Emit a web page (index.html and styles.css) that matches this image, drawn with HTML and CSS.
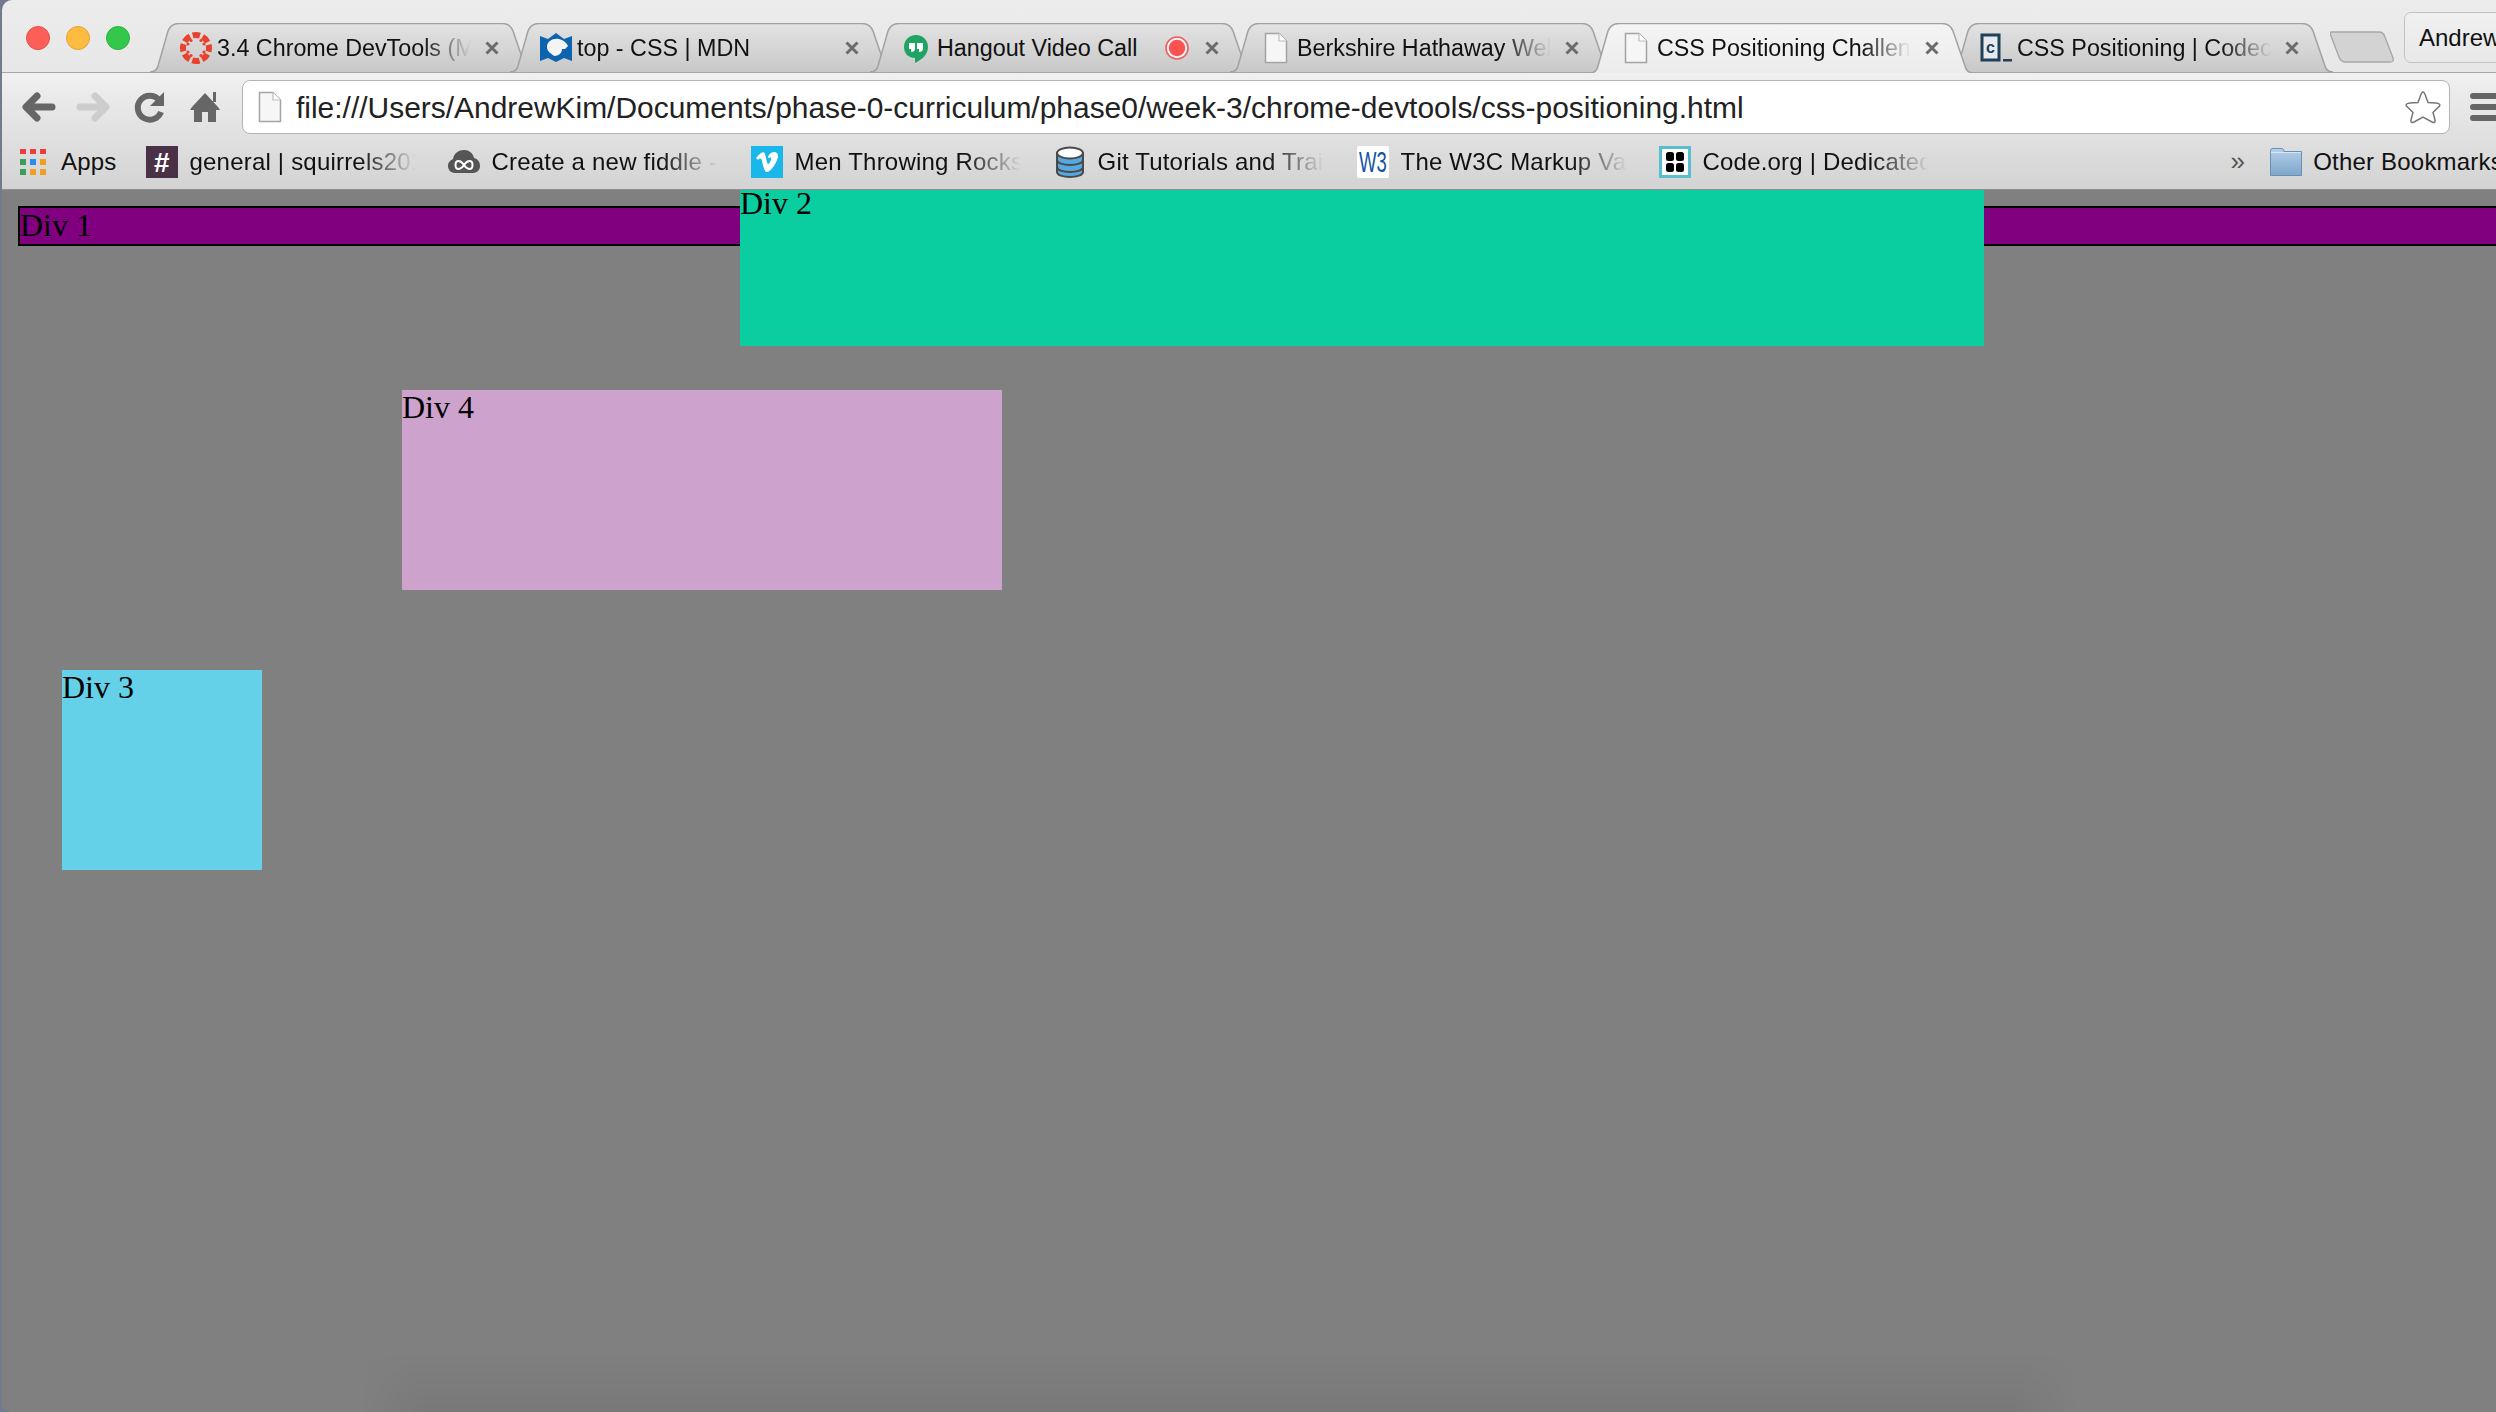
FILE: index.html
```html
<!DOCTYPE html>
<html lang="en">
<head>
    <meta charset="UTF-8">
    <title>CSS Positioning Challenge</title>
    <link rel="stylesheet" href="styles.css">
</head>
<body>

<svg class="defs" width="0" height="0">
    <defs>
        <linearGradient id="tab-off" x1="0" y1="0" x2="0" y2="1">
            <stop offset="0" stop-color="#e3e3e3"/>
            <stop offset="1" stop-color="#c8c8c8"/>
        </linearGradient>
        <linearGradient id="tab-on" x1="0" y1="0" x2="0" y2="1">
            <stop offset="0" stop-color="#f4f4f4"/>
            <stop offset="1" stop-color="#ececec"/>
        </linearGradient>
        <linearGradient id="folder-fill" x1="0" y1="0" x2="0" y2="1">
            <stop offset="0" stop-color="#b5d0e8"/>
            <stop offset="1" stop-color="#7ea6cc"/>
        </linearGradient>
        <symbol id="doc" viewBox="0 0 24 32">
            <path d="M1.5 1.5H15L22.5 9V30.5H1.5Z" fill="#f6f6f6" stroke="#a4a4a4" stroke-width="1.5"/>
            <path d="M15 1.5V9H22.5" fill="#fff" stroke="#bdbdbd" stroke-width="1.2"/>
        </symbol>
        <symbol id="x" viewBox="0 0 14 14">
            <path d="M1.5 1.5L12.5 12.5M12.5 1.5L1.5 12.5" stroke="#6c6c6c" stroke-width="3" fill="none"/>
        </symbol>
    </defs>
</svg>

<div class="window">
    <div class="tab-strip">
        <div class="traffic">
            <span class="light light-red"></span>
            <span class="light light-yellow"></span>
            <span class="light light-green"></span>
        </div>
        <div class="tab">
            <svg class="tab-shape" viewBox="0 0 383 50"><path d="M0 49C5 49 7 47 8 43L18 8C20 3 23 .5 29 .5H352C358 .5 361 3 363 8L375 43C376 47 378 49 383 49" fill="url(#tab-off)" stroke="#a2a2a2" stroke-width="1.5"/></svg>
            <svg class="favicon" viewBox="0 0 32 32">
                <circle cx="16" cy="16" r="13" fill="none" stroke="#e8412e" stroke-width="6" stroke-dasharray="7.4 2.8" stroke-dashoffset="3.7"/>
                <g fill="#e8412e">
                    <circle cx="11" cy="8.5" r="1.6"/><circle cx="21" cy="8.5" r="1.6"/>
                    <circle cx="8" cy="12" r="1.6"/><circle cx="24" cy="12" r="1.6"/>
                    <circle cx="8" cy="20" r="1.6"/><circle cx="24" cy="20" r="1.6"/>
                    <circle cx="11" cy="23.5" r="1.6"/><circle cx="21" cy="23.5" r="1.6"/>
                </g>
            </svg>
            <span class="tab-title">3.4 Chrome DevTools (Mo</span>
            <svg class="tab-close"><use href="#x"/></svg>
        </div>
        <div class="tab">
            <svg class="tab-shape" viewBox="0 0 383 50"><path d="M0 49C5 49 7 47 8 43L18 8C20 3 23 .5 29 .5H352C358 .5 361 3 363 8L375 43C376 47 378 49 383 49" fill="url(#tab-off)" stroke="#a2a2a2" stroke-width="1.5"/></svg>
            <svg class="favicon" viewBox="0 0 32 32">
                <path d="M0 4L8 7L16 1L24 7L32 4V29L24 26L16 30L8 26L0 29Z" fill="#0d63ad"/>
                <path d="M7 15C7 9 13 6 19 7C23 8 27 11 28 14L25 17L22 17C22 21 19 24 14 24C12 22 7 20 7 15Z" fill="#f4f4f4"/>
            </svg>
            <span class="tab-title">top - CSS | MDN</span>
            <svg class="tab-close"><use href="#x"/></svg>
        </div>
        <div class="tab">
            <svg class="tab-shape" viewBox="0 0 383 50"><path d="M0 49C5 49 7 47 8 43L18 8C20 3 23 .5 29 .5H352C358 .5 361 3 363 8L375 43C376 47 378 49 383 49" fill="url(#tab-off)" stroke="#a2a2a2" stroke-width="1.5"/></svg>
            <svg class="favicon" viewBox="0 0 32 32">
                <path d="M16 3C9 3 4 8 4 15C4 22 9 26 15 26V31C21 28 28 23 28 15C28 8 23 3 16 3Z" fill="#1fa463"/>
                <path d="M9 11H15V17C15 19 13 20 11 20V17H9ZM17 11H23V17C23 19 21 20 19 20V17H17Z" fill="#fff"/>
            </svg>
            <span class="tab-title tab-title-full">Hangout Video Call</span>
            <svg class="record" viewBox="0 0 24 24"><circle cx="12" cy="12" r="11" fill="#f8f8f8" stroke="#f25a5a" stroke-width="1.6"/><circle cx="12" cy="12" r="8.2" fill="#f85252"/></svg>
            <svg class="tab-close"><use href="#x"/></svg>
        </div>
        <div class="tab">
            <svg class="tab-shape" viewBox="0 0 383 50"><path d="M0 49C5 49 7 47 8 43L18 8C20 3 23 .5 29 .5H352C358 .5 361 3 363 8L375 43C376 47 378 49 383 49" fill="url(#tab-off)" stroke="#a2a2a2" stroke-width="1.5"/></svg>
            <svg class="favicon"><use href="#doc"/></svg>
            <span class="tab-title">Berkshire Hathaway Web Pa</span>
            <svg class="tab-close"><use href="#x"/></svg>
        </div>
        <div class="tab tab-active">
            <svg class="tab-shape" viewBox="0 0 383 50"><path d="M0 50C5 50 7 47 8 43L18 8C20 3 23 .5 29 .5H352C358 .5 361 3 363 8L375 43C376 47 378 50 383 50" fill="url(#tab-on)" stroke="#a2a2a2" stroke-width="1.5"/></svg>
            <svg class="favicon"><use href="#doc"/></svg>
            <span class="tab-title">CSS Positioning Challenge</span>
            <svg class="tab-close"><use href="#x"/></svg>
        </div>
        <div class="tab">
            <svg class="tab-shape" viewBox="0 0 383 50"><path d="M0 49C5 49 7 47 8 43L18 8C20 3 23 .5 29 .5H352C358 .5 361 3 363 8L375 43C376 47 378 49 383 49" fill="url(#tab-off)" stroke="#a2a2a2" stroke-width="1.5"/></svg>
            <svg class="favicon" viewBox="0 0 32 32">
                <rect x="2" y="3" width="17" height="25" fill="#e6eaee" stroke="#1f4058" stroke-width="3"/>
                <text x="10.5" y="21" class="favicon-c">c</text>
                <rect x="23" y="27" width="9" height="2.5" fill="#1f4058"/>
            </svg>
            <span class="tab-title">CSS Positioning | Codecademy</span>
            <svg class="tab-close"><use href="#x"/></svg>
        </div>
        <svg class="new-tab" viewBox="0 0 64 32"><path d="M1 1H49C52 1 54 3 55 6L63 27C64 30 62 31 60 31H16C12 31 10 29 9 26L1 5C0 3 0 1 1 1Z" fill="#d3d3d3" stroke="#a8a8a8" stroke-width="1.4"/></svg>
        <div class="profile">Andrew</div>
    </div>

    <div class="chrome-bars">
        <div class="toolbar">
            <svg class="nav-icon" viewBox="0 0 36 36"><path d="M32 18H8M17 7L6 18L17 29" fill="none" stroke="#666" stroke-width="7" stroke-linecap="round" stroke-linejoin="round"/></svg>
            <svg class="nav-icon" viewBox="0 0 36 36"><path d="M4 18H28M19 7L30 18L19 29" fill="none" stroke="#cdcdcd" stroke-width="7" stroke-linecap="round" stroke-linejoin="round"/></svg>
            <svg class="nav-icon" viewBox="0 0 36 36"><path d="M27 11A12 12 0 1 0 29 23" fill="none" stroke="#666" stroke-width="6"/><path d="M32 3V17H18Z" fill="#666"/></svg>
            <svg class="nav-icon nav-home" viewBox="0 0 34 36"><path d="M17 4L30 18L32 21H28V33H20V23H14V33H6V21H2L4 18Z" fill="#666"/><rect x="25" y="3" width="3" height="10" fill="#666"/></svg>
            <div class="omnibox">
                <svg class="omni-doc"><use href="#doc"/></svg>
                <span class="omni-url">file:///Users/AndrewKim/Documents/phase-0-curriculum/phase0/week-3/chrome-devtools/css-positioning.html</span>
                <svg class="omni-star" viewBox="0 0 36 34"><path d="M18 2C19.500 2 20 4 21 7L23 12.500L31 13C34 13.300 35.500 14.500 34.500 16L28 22.500L30 30C30.500 32.500 29 33 27 32L18 27L9 32C7 33 5.500 32.500 6 30L8 22.500L1.500 16C.5 14.500 2 13.300 5 13L13 12.500L15 7C16 4 16.500 2 18 2Z" fill="#fff" stroke="#777" stroke-width="1.5"/></svg>
            </div>
            <div class="menu-btn"><span></span><span></span><span></span></div>
        </div>

        <div class="bookmarks">
            <div class="bm bm-apps">
                <svg class="bm-icon" viewBox="0 0 26 26">
                    <rect width="6" height="5" fill="#ee3b3b"/><rect x="10" width="6" height="5" fill="#ee3b3b"/><rect x="20" width="6" height="5" fill="#ee3b3b"/>
                    <rect y="10" width="6" height="6" fill="#3c9e58"/><rect x="10" y="10" width="6" height="6" fill="#2b8cf0"/><rect x="20" y="10" width="6" height="6" fill="#f0a020"/>
                    <rect y="20" width="6" height="6" fill="#3c9e58"/><rect x="10" y="20" width="6" height="6" fill="#f0a020"/><rect x="20" y="20" width="6" height="6" fill="#f0a020"/>
                </svg>
                <span>Apps</span>
            </div>
            <div class="bm">
                <svg class="bm-icon" viewBox="0 0 32 32"><rect width="32" height="32" fill="#4a3148"/><text x="16" y="26" class="icon-hash">#</text></svg>
                <span class="bm-title bm-title-narrow">general | squirrels2015</span>
            </div>
            <div class="bm">
                <svg class="bm-icon" viewBox="0 0 32 32"><path d="M7 27C2 27 0 23 0 20C0 16 3 14 5 13C6 7 11 4 16 4C21 4 25 7 26 12C30 13 32 16 32 20C32 24 29 27 25 27Z" fill="#555"/><path d="M16 19C14 16 12 15 10.500 15C8.500 15 7.500 17 7.500 19C7.500 21 8.500 23 10.500 23C12 23 14 22 16 19C18 16 20 15 21.500 15C23.500 15 24.500 17 24.500 19C24.500 21 23.500 23 21.500 23C20 23 18 22 16 19Z" fill="none" stroke="#fff" stroke-width="2"/></svg>
                <span class="bm-title">Create a new fiddle - JSFid</span>
            </div>
            <div class="bm">
                <svg class="bm-icon" viewBox="0 0 32 32"><rect width="32" height="32" fill="#1ab7ea"/><path d="M5 12L7 14C9 12 10 12 11 15C12 19 13 26 16 26C20 26 27 15 27 10C27 6 23 5 20 7C18 8 17 10 17 12C19 11 21 11 20 14C19 16 18 18 17 18C16 18 15 11 14 8C13 5 10 6 5 12Z" fill="#fff"/></svg>
                <span class="bm-title">Men Throwing Rocks</span>
            </div>
            <div class="bm">
                <svg class="bm-icon" viewBox="0 0 32 32">
                    <path d="M3 7V26C3 29 9 31 16 31C23 31 29 29 29 26V7Z" fill="#55a8e0" stroke="#4a4a4a" stroke-width="2"/>
                    <path d="M3 14C3 17 9 19 16 19C23 19 29 17 29 14M3 21C3 24 9 26 16 26C23 26 29 24 29 21" fill="none" stroke="#4a4a4a" stroke-width="2"/>
                    <ellipse cx="16" cy="7" rx="13" ry="5.500" fill="#fff" stroke="#4a4a4a" stroke-width="2"/>
                </svg>
                <span class="bm-title">Git Tutorials and Training</span>
            </div>
            <div class="bm">
                <svg class="bm-icon" viewBox="0 0 32 32"><rect width="32" height="32" rx="2" fill="#fff"/><text x="16" y="26" textLength="28" lengthAdjust="spacingAndGlyphs" class="icon-w3">W3</text></svg>
                <span class="bm-title">The W3C Markup Validation</span>
            </div>
            <div class="bm bm-code">
                <svg class="bm-icon" viewBox="0 0 32 32">
                    <rect x="1.500" y="1.500" width="29" height="29" fill="#fff" stroke="#59bfcf" stroke-width="3"/>
                    <rect x="7" y="6" width="8" height="9" rx="2.500"/><rect x="17" y="6" width="8" height="9" rx="2.500"/>
                    <rect x="7" y="17" width="8" height="9" rx="2.500"/><rect x="17" y="17" width="8" height="9" rx="2.500"/>
                </svg>
                <span class="bm-title">Code.org | Dedicated to</span>
            </div>
            <span class="bm-more">»</span>
            <div class="bm bm-other">
                <svg class="bm-icon" viewBox="0 0 32 28"><path d="M.5 4C.5 1 1 .5 3 .5H11C13 .5 13.500 1 14 3.500H31.500V27.500H.5Z" fill="url(#folder-fill)" stroke="#6a8fb2"/><path d="M1 4.500H31" stroke="#d8e6f2"/></svg>
                <span>Other Bookmarks</span>
            </div>
        </div>
    </div>

    <main class="page">
        <div class="box div-1">Div 1</div>
        <div class="box div-2">Div 2</div>
        <div class="box div-4">Div 4</div>
        <div class="box div-3">Div 3</div>
    </main>
</div>

</body>
</html>
```

FILE: styles.css
```css
html, body {
    margin: 0;
    height: 100%;
    background: #717a8e;
    overflow: hidden;
}

.defs {
    position: absolute;
}

.window {
    margin-left: 2px;
    height: 1412px;
    display: flex;
    flex-direction: column;
    border-radius: 10px 0 0 8px;
    overflow: hidden;
    font-family: "Liberation Sans", Arial, sans-serif;
    color: #111;
}

/* tab strip */
.tab-strip {
    flex: none;
    height: 73px;
    box-sizing: border-box;
    padding-left: 24px;
    display: flex;
    align-items: flex-end;
    background: linear-gradient(to bottom, #ececec, #e7e7e7 72px, #a6a6a6 72px);
}

.traffic {
    flex: none;
    align-self: flex-start;
    display: flex;
    gap: 16px;
    margin: 26px 20px 0 0;
}

.light {
    width: 24px;
    height: 24px;
    box-sizing: border-box;
    border-radius: 50%;
    border: 1px solid;
}

.light-red {
    background: #fc5f57;
    border-color: #e0504a;
}

.light-yellow {
    background: #fdbc40;
    border-color: #e0a236;
}

.light-green {
    background: #34c84a;
    border-color: #2cb03f;
}

.tab {
    position: relative;
    flex: none;
    width: 383px;
    height: 50px;
    margin-right: -23px;
    box-sizing: border-box;
    padding-left: 30px;
    display: flex;
    align-items: center;
    font-size: 23.3px;
}

.tab-active {
    z-index: 2;
}

.tab-shape {
    position: absolute;
    left: 0;
    top: 0;
    width: 383px;
    height: 50px;
}

.favicon {
    position: relative;
    flex: none;
    width: 32px;
    height: 32px;
    margin-right: 5px;
}

.favicon-c {
    font-family: "Liberation Mono", monospace;
    font-size: 16px;
    font-weight: bold;
    text-anchor: middle;
    fill: #1f4058;
}

.tab-title {
    position: relative;
    flex: none;
    width: 256px;
    white-space: nowrap;
    overflow: hidden;
    -webkit-mask-image: linear-gradient(to right, #000 205px, transparent 254px);
    mask-image: linear-gradient(to right, #000 205px, transparent 254px);
}

.tab-title-full {
    width: 228px;
    -webkit-mask-image: none;
    mask-image: none;
}

.record {
    position: relative;
    flex: none;
    width: 24px;
    height: 24px;
    margin-right: 4px;
}

.tab-close {
    position: relative;
    flex: none;
    width: 14px;
    height: 14px;
    margin-left: 12px;
}

.new-tab {
    flex: none;
    position: relative;
    width: 64px;
    height: 32px;
    margin: 0 0 10px 20px;
}

.profile {
    flex: none;
    width: 130px;
    height: 51px;
    box-sizing: border-box;
    margin: 0 0 10px 10px;
    padding-left: 14px;
    line-height: 50px;
    font-size: 24px;
    border: 1px solid #c2c2c2;
    border-radius: 7px;
    background: linear-gradient(to bottom, #f0f0f0, #e8e8e8);
}

/* toolbar and bookmarks */
.chrome-bars {
    flex: none;
    height: 117px;
    box-sizing: border-box;
    border-bottom: 1px solid #8f8f8f;
    background: linear-gradient(to bottom, #f0f0f0, #d3d3d3);
}

.toolbar {
    height: 68px;
    box-sizing: border-box;
    padding-left: 18px;
    display: flex;
    align-items: center;
    gap: 20px;
}

.nav-icon {
    flex: none;
    width: 36px;
    height: 36px;
}

.nav-home {
    width: 34px;
}

.omnibox {
    flex: none;
    width: 2208px;
    height: 54px;
    box-sizing: border-box;
    padding: 0 8px 0 15px;
    display: flex;
    align-items: center;
    background: #fff;
    border: 1px solid #b4b4b4;
    border-radius: 8px;
}

.omni-doc {
    flex: none;
    width: 24px;
    height: 32px;
    margin-right: 14px;
}

.omni-url {
    font-size: 29.95px;
    color: #222;
    white-space: nowrap;
    position: relative;
    top: 1px;
}

.omni-star {
    flex: none;
    width: 36px;
    height: 34px;
    margin-left: auto;
}

.menu-btn {
    flex: none;
    width: 30px;
    display: flex;
    flex-direction: column;
    gap: 5px;
    margin-top: -1px;
}

.menu-btn span {
    height: 6px;
    background: #666;
    border-radius: 3px;
}

.bookmarks {
    height: 41px;
    padding-left: 18px;
    display: flex;
    align-items: center;
    gap: 32px;
    font-size: 24px;
    letter-spacing: 0.2px;
    white-space: nowrap;
}

.bm {
    flex: none;
    display: flex;
    align-items: center;
    gap: 12px;
}

.bm-icon {
    flex: none;
    width: 32px;
    height: 32px;
}

.bm-apps {
    gap: 15px;
    margin-right: -3px;
}

.bm-apps .bm-icon {
    width: 26px;
    height: 26px;
}

.bm-title {
    width: 227px;
    overflow: hidden;
    -webkit-mask-image: linear-gradient(to right, #000 170px, transparent 226px);
    mask-image: linear-gradient(to right, #000 170px, transparent 226px);
}

.bm-title-narrow {
    width: 226px;
}

.bm-code {
    margin-left: -1px;
}

.icon-hash {
    font-family: "Liberation Sans", sans-serif;
    font-size: 28px;
    font-weight: bold;
    text-anchor: middle;
    fill: #fff;
}

.icon-w3 {
    font-family: "Liberation Sans", sans-serif;
    font-size: 30px;
    text-anchor: middle;
    fill: #14569e;
}

.bm-more {
    flex: none;
    margin-left: 269px;
    margin-right: -7px;
    color: #555;
    font-size: 26px;
}

.bm-other {
    gap: 11px;
}

.bm-other .bm-icon {
    height: 28px;
}

/* page content */
.page {
    position: relative;
    flex: 1;
    padding-top: 16px;
    background: #808080;
    font-family: "Liberation Serif", "Times New Roman", serif;
    font-size: 32px;
    line-height: 34px;
    color: #000;
    overflow: hidden;
}

.page::after {
    content: "";
    position: absolute;
    left: 360px;
    right: 420px;
    bottom: 0;
    height: 60px;
    background: linear-gradient(to bottom, transparent, rgba(0, 0, 0, 0.06));
    -webkit-mask-image: linear-gradient(to right, transparent, #000 60px, #000 calc(100% - 60px), transparent);
    mask-image: linear-gradient(to right, transparent, #000 60px, #000 calc(100% - 60px), transparent);
}

.box {
    box-sizing: border-box;
}

.div-1 {
    height: 40px;
    margin: 0 -4px 0 16px;
    background: #800080;
    border: 2px solid #000;
}

.div-2 {
    position: absolute;
    left: 738px;
    top: 0;
    width: 1244px;
    height: 156px;
    line-height: 27px;
    background: #0aCE9F;
}

.div-4 {
    width: 600px;
    height: 200px;
    margin: 144px 0 0 400px;
    background: #cda2cc;
}

.div-3 {
    width: 200px;
    height: 200px;
    margin: 80px 0 0 60px;
    background: #65d1e8;
}
```
